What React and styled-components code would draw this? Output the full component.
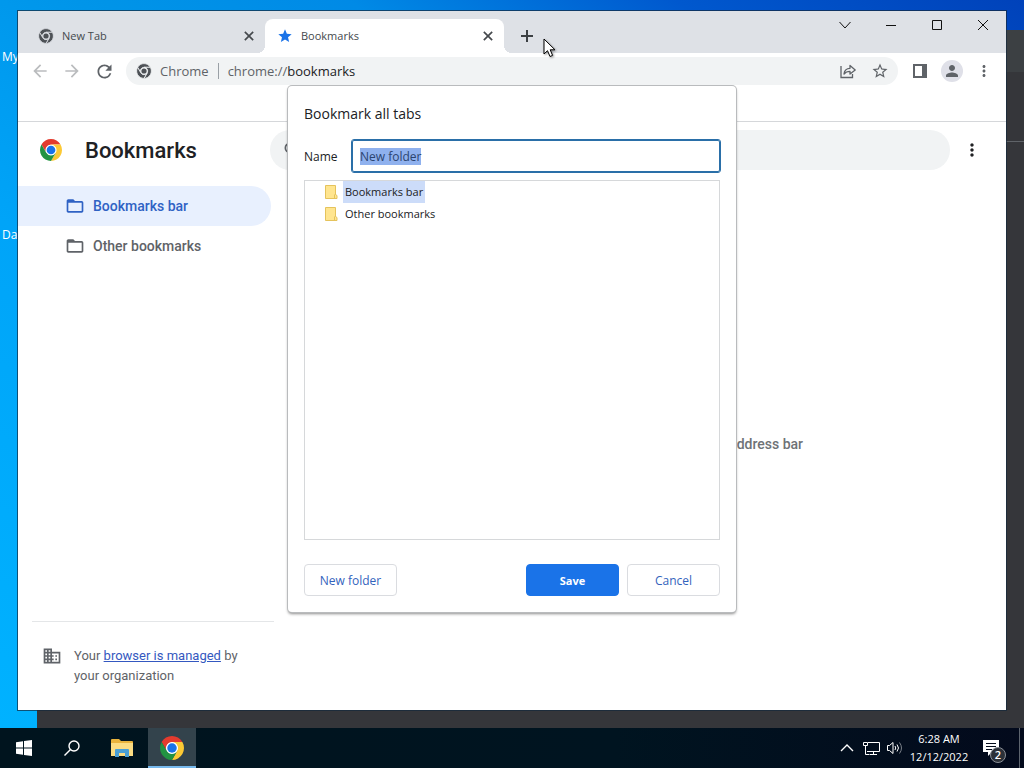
import React, { useEffect, useRef, useState } from 'react';
import styled, { createGlobalStyle } from 'styled-components';
import {
  MdArrowBack,
  MdArrowForward,
  MdBusiness,
  MdFolderOpen,
  MdMoreVert,
  MdPerson,
  MdRefresh,
  MdSearch,
  MdStar,
  MdStarBorder,
} from 'react-icons/md';

const CHROME_WEDGE = 'M24 12H44.78A24 24 0 0 0 3.22 12L13.6 30A12 12 0 0 1 24 12z';

const ChromeLogo = ({ size }) => (
  <svg width={size} height={size} viewBox="0 0 48 48" aria-hidden="true">
    <circle cx="24" cy="24" r="13" fill="#fff" />
    <path d={CHROME_WEDGE} fill="#e33b2e" />
    <path d={CHROME_WEDGE} fill="#fcc934" transform="rotate(120 24 24)" />
    <path d={CHROME_WEDGE} fill="#229342" transform="rotate(240 24 24)" />
    <circle cx="24" cy="24" r="9.5" fill="#1a73e8" />
  </svg>
);

const ChromeMono = ({ gap }) => (
  <svg width="16" height="16" viewBox="-2 -2 52 52" aria-hidden="true">
    {[0, 120, 240].map((angle) => (
      <path key={angle} d={CHROME_WEDGE} fill="#4d5156" stroke={gap} strokeWidth="2.5" transform={`rotate(${angle} 24 24)`} />
    ))}
    <circle cx="24" cy="24" r="8.5" fill="#4d5156" />
  </svg>
);

const Cross = ({ size, width }) => (
  <svg width={size} height={size} viewBox="0 0 12 12" stroke="currentColor" strokeWidth={width} fill="none" aria-hidden="true">
    <path d="M1 1l10 10M11 1L1 11" />
  </svg>
);

const TreeFolder = () => (
  <svg width="14" height="16" viewBox="0 0 14 16" aria-hidden="true">
    <path d="M1.5 1.5h10v9l1.5 1v3H1.5z" fill="#ffe58f" stroke="#e5c35c" />
    <path d="M10.5 14.5v-3.500l1-1" fill="none" stroke="#e5c35c" />
  </svg>
);

const App = () => {
  const nameRef = useRef(null);
  const [name, setName] = useState('New folder');

  useEffect(() => {
    nameRef.current.focus();
    nameRef.current.select();
  }, []);

  return (
    <Screen>
      <GlobalStyle />
      <Desktop>
        <DesktopIcons>
          <DesktopLabel>My</DesktopLabel>
          <DesktopLabel>Da</DesktopLabel>
        </DesktopIcons>
        <BackWindow>
          <BackStrip />
          <BackToolbar />
        </BackWindow>

        <BrowserWindow>
          <TabStrip>
            <Tab>
              <ChromeMono gap="#dee1e6" />
              <TabTitle>New Tab</TabTitle>
              <TabClose aria-label="Close New Tab"><Cross size={10} width={2} /></TabClose>
            </Tab>
            <Tab $active>
              <MdStar size={16} color="#1a73e8" />
              <TabTitle>Bookmarks</TabTitle>
              <TabClose aria-label="Close Bookmarks"><Cross size={10} width={2} /></TabClose>
            </Tab>
            <NewTab aria-label="New tab">
              <svg width="12" height="12" viewBox="0 0 12 12" stroke="currentColor" strokeWidth="2">
                <path d="M6 0v12M0 6h12" />
              </svg>
            </NewTab>
            <WindowControls>
              <ControlButton aria-label="Search tabs">
                <svg width="12" height="12" viewBox="0 0 12 12" fill="none" stroke="currentColor">
                  <path d="M.5 3L6 9l5.500-6" />
                </svg>
              </ControlButton>
              <ControlButton aria-label="Minimize">
                <svg width="10" height="10" viewBox="0 0 10 10" stroke="currentColor"><path d="M0 5.500h10" /></svg>
              </ControlButton>
              <ControlButton aria-label="Maximize">
                <svg width="10" height="10" viewBox="0 0 10 10" fill="none" stroke="currentColor"><path d="M.5.5h9v9h-9z" /></svg>
              </ControlButton>
              <ControlButton aria-label="Close"><Cross size={12} width={1} /></ControlButton>
            </WindowControls>
          </TabStrip>

          <Toolbar>
            <ToolButton aria-label="Back" $dim><MdArrowBack size={20} /></ToolButton>
            <ToolButton aria-label="Forward" $dim><MdArrowForward size={20} /></ToolButton>
            <ToolButton aria-label="Reload"><MdRefresh size={21} /></ToolButton>
            <Omnibox>
              <ChromeMono gap="#f1f3f4" />
              <SiteName>Chrome</SiteName>
              <Url>chrome://<b>bookmarks</b></Url>
              <ToolButton aria-label="Share">
                <svg width="16" height="16" viewBox="0 0 16 16" fill="none" stroke="currentColor" strokeWidth="1.300">
                  <path d="M1 3v11.500h11.500V11" />
                  <path d="M4 11c.4-3.800 2.600-5.600 6-5.700V2.500L15.200 7 10 11V8.300c-2.600 0-4.500.8-6 2.700z" strokeLinejoin="round" />
                </svg>
              </ToolButton>
              <ToolButton aria-label="Bookmark this tab"><MdStarBorder size={18} /></ToolButton>
            </Omnibox>
            <ToolButton aria-label="Side panel">
              <svg width="14" height="14" viewBox="0 0 14 14">
                <path d="M1 1h12v12H1z" fill="none" stroke="currentColor" strokeWidth="2" />
                <path d="M9 1h4v12H9z" fill="currentColor" />
              </svg>
            </ToolButton>
            <ToolButton aria-label="Profile"><Avatar><MdPerson size={18} /></Avatar></ToolButton>
            <ToolButton aria-label="Menu"><MdMoreVert size={18} /></ToolButton>
          </Toolbar>
          <BookmarksBar />

          <PageHeader>
            <Brand>
              <ChromeLogo size={22} />
              <h1>Bookmarks</h1>
            </Brand>
            <SearchBox>
              <MdSearch size={20} />
              <input type="search" aria-label="Search bookmarks" />
            </SearchBox>
            <ToolButton aria-label="Organize" $dark><MdMoreVert size={20} /></ToolButton>
          </PageHeader>

          <PageBody>
            <Sidebar>
              <nav>
                <SideItem href="#bar" $active><MdFolderOpen size={20} />Bookmarks bar</SideItem>
                <SideItem href="#other"><MdFolderOpen size={20} />Other bookmarks</SideItem>
              </nav>
              <Managed>
                <MdBusiness size={20} />
                <p>Your <a href="#managed">browser is managed</a> by your organization</p>
              </Managed>
            </Sidebar>
            <EmptyList>To bookmark pages, click the star in the address bar</EmptyList>
          </PageBody>

          <DialogLayer>
            <Dialog role="dialog" aria-labelledby="dialog-title">
              <h2 id="dialog-title">Bookmark all tabs</h2>
              <NameRow>
                <label htmlFor="folder-name">Name</label>
                <input id="folder-name" ref={nameRef} value={name} onChange={(e) => setName(e.target.value)} />
              </NameRow>
              <Tree>
                <TreeRow $selected><TreeFolder /><span>Bookmarks bar</span></TreeRow>
                <TreeRow><TreeFolder /><span>Other bookmarks</span></TreeRow>
              </Tree>
              <DialogActions>
                <DialogButton>New folder</DialogButton>
                <Spacer />
                <DialogButton $primary>Save</DialogButton>
                <DialogButton>Cancel</DialogButton>
              </DialogActions>
            </Dialog>
          </DialogLayer>
        </BrowserWindow>

        <Pointer width="13" height="21" viewBox="0 0 13 21" aria-hidden="true">
          <path d="M1 1v15l3.500-3.300L7 18.500l2.600-1.100-2.400-5.600H12z" fill="#fff" stroke="#000" />
        </Pointer>
      </Desktop>

      <Taskbar>
        <TaskButton aria-label="Start">
          <svg width="16" height="16" viewBox="0 0 16 16" fill="#fff">
            <path d="M0 2.300l7-1v6.200H0zM8 1.100L16 0v7.500H8zM0 8.500h7v6.200l-7-1zM8 8.500h8V16l-8-1.100z" />
          </svg>
        </TaskButton>
        <TaskButton aria-label="Search">
          <svg width="16" height="16" viewBox="0 0 16 16" fill="none" stroke="#fff" strokeWidth="1.400">
            <circle cx="10" cy="6" r="5" />
            <path d="M6.500 9.500L.5 15.500" />
          </svg>
        </TaskButton>
        <TaskList>
          <TaskButton aria-label="File Explorer">
            <svg width="22" height="18" viewBox="0 0 22 18">
              <path d="M0 1q0-1 1-1h7l2 2h11q1 0 1 1v14H0z" fill="#e9b33c" />
              <path d="M0 4h22v13H0z" fill="#fbdc82" />
              <path d="M4 18v-7q0-1 1-1h12q1 0 1 1v7h-4v-4H8v4z" fill="#4a9fd4" />
            </svg>
          </TaskButton>
          <TaskButton aria-label="Google Chrome" $open><ChromeLogo size={24} /></TaskButton>
        </TaskList>
        <Spacer />
        <TrayButton aria-label="Show hidden icons">
          <svg width="14" height="8" viewBox="0 0 14 8" fill="none" stroke="#fff" strokeWidth="1.400"><path d="M1 7l6-6 6 6" /></svg>
        </TrayButton>
        <TrayButton aria-label="Network">
          <svg width="17" height="15" viewBox="0 0 17 15" fill="none" stroke="#fff">
            <path d="M5 1.500h11.500v9H4M.5 1.500h4v3h-4zM2.500 5v8.500h4M10.500 11v2.500M7 13.500h7" />
          </svg>
        </TrayButton>
        <TrayButton aria-label="Volume">
          <svg width="16" height="14" viewBox="0 0 16 14" fill="none" stroke="#fff">
            <path d="M.5 4.500h2l3.500-3v11l-3.500-3h-2zM8 5q1.500 2 0 4M10 3.500q3 3.500 0 7" />
            <path d="M12.500 1.500q4 5.500 0 11" stroke="#7a8088" />
          </svg>
        </TrayButton>
        <Clock><span>6:28 AM</span><span>12/12/2022</span></Clock>
        <NoticeButton aria-label="Notifications">
          <svg width="16" height="16" viewBox="0 0 16 16">
            <path d="M0 0h16v12H9l-4 4v-4H0z" fill="#fff" />
            <path d="M3 3.500h10M3 6.500h10M3 9.500h6" stroke="#050d1c" />
          </svg>
          <NoticeCount>2</NoticeCount>
        </NoticeButton>
        <ShowDesktop aria-label="Show desktop" />
      </Taskbar>
    </Screen>
  );
};

const GlobalStyle = createGlobalStyle`
  * {
    box-sizing: border-box;
  }

  body {
    margin: 0;
    font-family: 'Open Sans', 'Noto Sans', sans-serif;
    font-size: 12px;
  }

  button {
    border: none;
    padding: 0;
    background: none;
    color: inherit;
    font: inherit;
  }

  h1, h2, p {
    margin: 0;
  }

  svg {
    flex: none;
  }
`;

const Screen = styled.div`
  display: flex;
  flex-direction: column;
  height: 100vh;
  overflow: hidden;
`;

const Desktop = styled.div`
  position: relative;
  flex: 1;
  min-height: 0;
  background: linear-gradient(to top right, #00b2ff 0%, #00a4f8 35%, #0094e8 55%, #008ae6 67%, #0058ce 83%, #0042ba 100%);
`;

const DesktopIcons = styled.div`
  display: flex;
  flex-direction: column;
  gap: 162px;
  padding: 49px 2px;
`;

const DesktopLabel = styled.span`
  color: #fff;
  line-height: 16px;
`;

const BackWindow = styled.div`
  position: absolute;
  inset: 30px 0 0 37px;
  background: #35363a;
`;

const BackStrip = styled.div`
  height: 42px;
  background: #3c4043;
`;

const BackToolbar = styled.div`
  height: 70px;
  border-bottom: 1px solid #5f6368;
`;

const BrowserWindow = styled.div`
  position: absolute;
  inset: 11px 18px 18px 18px;
  display: flex;
  flex-direction: column;
  background: #fff;
  box-shadow: 0 0 0 1px rgba(20, 40, 60, 0.7);
`;

const TabStrip = styled.div`
  display: flex;
  align-items: flex-end;
  height: 42px;
  padding-left: 8px;
  background: #dee1e6;
`;

const Tab = styled.div`
  position: relative;
  display: flex;
  align-items: center;
  gap: 8px;
  width: 239px;
  height: 34px;
  padding: 0 8px 0 12px;
  border-radius: 8px 8px 0 0;
  background: ${({ $active }) => ($active ? '#fff' : 'transparent')};
  color: #45494d;

  &::before,
  &::after {
    content: '';
    display: ${({ $active }) => ($active ? 'block' : 'none')};
    position: absolute;
    bottom: 0;
    width: 8px;
    height: 8px;
  }

  &::before {
    left: -8px;
    background: radial-gradient(circle at 0 0, transparent 8px, #fff 8px);
  }

  &::after {
    right: -8px;
    background: radial-gradient(circle at 100% 0, transparent 8px, #fff 8px);
  }
`;

const TabTitle = styled.span`
  flex: 1;
  font-size: 11px;
  line-height: 16px;
`;

const TabClose = styled.button`
  display: flex;
  align-items: center;
  justify-content: center;
  width: 16px;
  height: 16px;
`;

const NewTab = styled.button`
  display: flex;
  align-items: center;
  justify-content: center;
  width: 28px;
  height: 34px;
  margin-left: 9px;
  color: #3c4043;
`;

const WindowControls = styled.div`
  display: flex;
  align-self: flex-start;
  margin-left: auto;
`;

const ControlButton = styled.button`
  display: flex;
  align-items: center;
  justify-content: center;
  width: 46px;
  height: 28px;
  color: #111;
`;

const Toolbar = styled.div`
  display: flex;
  align-items: center;
  height: 36px;
  padding: 0 6px;
`;

const ToolButton = styled.button`
  display: flex;
  align-items: center;
  justify-content: center;
  width: 32px;
  height: 28px;
  color: ${({ $dim, $dark }) => ($dim ? '#babcbe' : $dark ? '#202124' : '#5f6368')};
`;

const Omnibox = styled.div`
  display: flex;
  flex: 1;
  align-items: center;
  height: 28px;
  margin: 0 6px;
  padding: 0 2px 0 10px;
  border-radius: 14px;
  background: #f1f3f4;
  color: #5f6368;
  font-size: 13px;
`;

const SiteName = styled.span`
  margin-left: 8px;
  padding-right: 9px;
  border-right: 1px solid #9aa0a6;
  line-height: 16px;
`;

const Url = styled.span`
  flex: 1;
  margin-left: 9px;

  b {
    color: #202124;
    font-weight: 400;
  }
`;

const Avatar = styled.span`
  display: flex;
  align-items: center;
  justify-content: center;
  width: 22px;
  height: 22px;
  border-radius: 50%;
  background: #dfe0e8;
`;

const BookmarksBar = styled.div`
  height: 33px;
  border-bottom: 1px solid #d5d7da;
`;

const PageHeader = styled.header`
  display: flex;
  align-items: center;
  height: 56px;
  padding-right: 18px;
  font-family: Roboto, sans-serif;
`;

const Brand = styled.div`
  display: flex;
  align-items: center;
  gap: 23px;
  width: 252px;
  padding-left: 22px;

  h1 {
    color: #202124;
    font-size: 22px;
    font-weight: 500;
  }
`;

const SearchBox = styled.label`
  display: flex;
  flex: 1;
  align-items: center;
  height: 40px;
  margin-right: 6px;
  padding: 0 12px;
  border-radius: 20px;
  background: #f1f3f4;
  color: #5f6368;

  input {
    flex: 1;
    border: none;
    outline: none;
    background: none;
  }
`;

const PageBody = styled.div`
  display: flex;
  flex: 1;
  min-height: 0;
  font-family: Roboto, sans-serif;
`;

const Sidebar = styled.aside`
  display: flex;
  flex-direction: column;
  justify-content: space-between;
  width: 256px;
  padding-top: 8px;
`;

const SideItem = styled.a`
  display: flex;
  align-items: center;
  gap: 8px;
  height: 40px;
  margin-right: 3px;
  padding-left: 47px;
  border-radius: 0 20px 20px 0;
  background: ${({ $active }) => ($active ? '#e8f0fe' : 'transparent')};
  color: ${({ $active }) => ($active ? '#2f62c4' : '#5f6368')};
  font-size: 14px;
  font-weight: 500;
  text-decoration: none;
`;

const Managed = styled.div`
  display: flex;
  align-items: flex-start;
  gap: 12px;
  margin-left: 14px;
  padding: 24px 24px 24px 10px;
  border-top: 1px solid #e4e6e8;
  color: #5f6368;
  font-size: 13px;
  line-height: 20px;

  a {
    color: #3458c0;
  }
`;

const EmptyList = styled.main`
  display: flex;
  flex: 1;
  align-items: center;
  justify-content: center;
  color: #6e7276;
  font-size: 14px;
  font-weight: 500;
`;

const DialogLayer = styled.div`
  position: absolute;
  inset: 75px 0 auto;
  display: flex;
  justify-content: center;
`;

const Dialog = styled.div`
  display: flex;
  flex-direction: column;
  width: 448px;
  padding: 16px;
  border-radius: 4px;
  background: #fff;
  box-shadow: 0 0 0 1px #b9bbbd, 0 2px 3px rgba(0, 0, 0, 0.45);
  color: #202124;

  h2 {
    font-size: 14px;
    font-weight: 400;
    line-height: 24px;
  }
`;

const NameRow = styled.div`
  display: flex;
  align-items: center;
  justify-content: space-between;
  margin: 14px 0 8px;

  input {
    width: 368px;
    height: 32px;
    padding: 0 7px;
    border: 1px solid #2a6fa8;
    border-radius: 2px;
    outline: 1px solid #2a6fa8;
    color: #202124;
    font: inherit;
  }

  input::selection {
    background: #8fb1ee;
    color: #2b4470;
  }
`;

const Tree = styled.ul`
  height: 360px;
  margin: 0;
  padding: 0 19px;
  border: 1px solid #d6d8da;
  list-style: none;
`;

const TreeRow = styled.li`
  display: flex;
  align-items: center;
  gap: 5px;
  height: 22px;
  font-size: 11px;

  span {
    padding: 0 2px;
    background: ${({ $selected }) => ($selected ? '#ccdcf9' : 'transparent')};
    line-height: 22px;
  }
`;

const DialogActions = styled.div`
  display: flex;
  gap: 8px;
  margin-top: 24px;
`;

const DialogButton = styled.button`
  width: 93px;
  height: 32px;
  border: 1px solid ${({ $primary }) => ($primary ? '#1a73e8' : '#dadce0')};
  border-radius: 4px;
  background: ${({ $primary }) => ($primary ? '#1a73e8' : '#fff')};
  color: ${({ $primary }) => ($primary ? '#fff' : '#3363bd')};
  font-size: ${({ $primary }) => ($primary ? '11px' : '12px')};
  font-weight: ${({ $primary }) => ($primary ? 700 : 500)};
`;

const Spacer = styled.div`
  flex: 1;
`;

const Pointer = styled.svg`
  position: absolute;
  top: 38px;
  left: 543px;
  filter: drop-shadow(1px 1px 1px rgba(0, 0, 0, 0.4));
`;

const Taskbar = styled.footer`
  display: flex;
  align-items: center;
  height: 40px;
  background: linear-gradient(to right, #00141e, #001420 60%, #030a1c);
  color: #fff;
`;

const TaskList = styled.div`
  display: flex;
  gap: 2px;
  margin-left: 2px;
`;

const TaskButton = styled.button`
  display: flex;
  align-items: center;
  justify-content: center;
  width: 48px;
  height: 40px;
  background: ${({ $open }) => ($open ? '#33434c' : 'none')};
  box-shadow: ${({ $open }) => ($open ? 'inset 0 -2px #76b9ed' : 'none')};
`;

const TrayButton = styled.button`
  display: flex;
  align-items: center;
  justify-content: center;
  width: 24px;
  height: 40px;
`;

const Clock = styled.div`
  display: flex;
  flex-direction: column;
  align-items: center;
  width: 64px;
  font-size: 11px;
  line-height: 18px;
`;

const NoticeButton = styled.button`
  position: relative;
  display: flex;
  align-items: center;
  justify-content: center;
  width: 48px;
  height: 40px;
  padding-right: 8px;
`;

const NoticeCount = styled.span`
  position: absolute;
  right: 13px;
  bottom: 5px;
  width: 16px;
  height: 16px;
  border: 1px solid #8b9098;
  border-radius: 50%;
  background: #2b3038;
  font-size: 11px;
  font-weight: 600;
  line-height: 14px;
`;

const ShowDesktop = styled.button`
  width: 5px;
  height: 40px;
  border-left: 1px solid #5d646e;
`;

export default App;
